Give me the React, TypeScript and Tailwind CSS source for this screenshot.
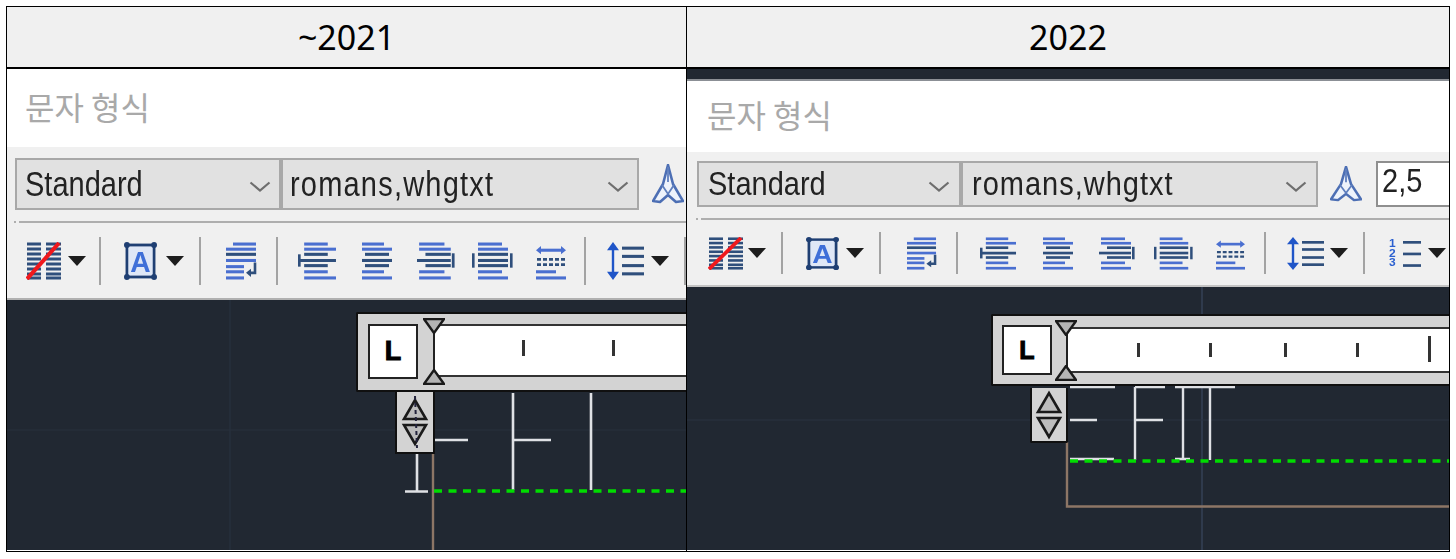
import type { ReactNode } from "react";

const BLUE = "#4a6fd0";
const DARK = "#2f4f7c";

type Line = [number, number, number, string?];

function LinesIcon({ w, h, vb, lines, children }: { w: number; h: number; vb: [number, number]; lines: Line[]; children?: ReactNode }) {
  return (
    <svg width={w} height={h} viewBox={`0 0 ${vb[0]} ${vb[1]}`} preserveAspectRatio="none" className="shrink-0">
      {lines.map(([x1, x2, y, c], i) => (
        <line key={i} x1={x1} x2={x2} y1={y} y2={y} stroke={c ?? BLUE} strokeWidth={3} />
      ))}
      {children}
    </svg>
  );
}

function StrikeIcon({ w, h }: { w: number; h: number }) {
  const ys = [2, 7, 12, 17, 22, 27, 32, 36];
  return (
    <LinesIcon
      w={w}
      h={h}
      vb={[35, 38]}
      lines={ys.flatMap((y): Line[] => [
        [1, 15, y, DARK],
        [20, 35, y, DARK],
      ])}
    >
      <line x1={1} y1={37} x2={33} y2={1} stroke="#f0181c" strokeWidth={4} />
    </LinesIcon>
  );
}

function BoxAIcon({ w, h }: { w: number; h: number }) {
  return (
    <svg width={w} height={h} viewBox="0 0 34 38" preserveAspectRatio="none" className="shrink-0">
      <rect x={3} y={3} width={28} height={32} fill="#dfe7f6" stroke="#1f3f73" strokeWidth={2.8} />
      {[[3, 3], [31, 3], [3, 35], [31, 35]].map(([cx, cy]) => (
        <circle key={`${cx}-${cy}`} cx={cx} cy={cy} r={3} fill="#1f3f73" />
      ))}
      <text x={17} y={30} textAnchor="middle" fontSize={29} fontWeight={700} fontFamily="Liberation Sans, sans-serif" fill="#3f6fd8">
        A
      </text>
    </svg>
  );
}

function WrapIcon({ w, h }: { w: number; h: number }) {
  return (
    <LinesIcon
      w={w}
      h={h}
      vb={[31, 37]}
      lines={[
        [7, 30, 2],
        [0, 30, 7],
        [0, 30, 12, DARK],
        [0, 30, 18],
        [0, 18, 24],
        [0, 18, 29],
        [0, 18, 35],
      ]}
    >
      <path d="M29 20v10H23" fill="none" stroke={DARK} strokeWidth={2.6} />
      <polygon points="20,30 25,26 25,34" fill={DARK} />
    </LinesIcon>
  );
}

const alignLeft: Line[] = [
  [6, 29, 2],
  [6, 37, 7],
  [6, 29, 12, DARK],
  [2, 37, 18, DARK],
  [6, 29, 23, DARK],
  [6, 29, 29],
  [6, 37, 35],
];
const alignCenter: Line[] = [
  [0, 22, 2],
  [0, 30, 7],
  [3, 27, 12, DARK],
  [0, 30, 18, DARK],
  [3, 27, 23, DARK],
  [0, 22, 29],
  [0, 30, 35],
];
const alignRight: Line[] = [
  [2, 26, 2],
  [2, 32, 7],
  [8, 32, 12, DARK],
  [0, 32, 18, DARK],
  [8, 32, 23, DARK],
  [2, 26, 29],
  [2, 32, 35],
];
const alignJustify: Line[] = [
  [6, 30, 2],
  [6, 36, 7],
  [6, 36, 12, DARK],
  [6, 36, 18, DARK],
  [6, 36, 23, DARK],
  [6, 30, 29],
  [6, 36, 35],
];

function AlignLeftIcon({ w, h }: { w: number; h: number }) {
  return (
    <LinesIcon w={w} h={h} vb={[38, 37]} lines={alignLeft}>
      <rect x={0} y={12} width={2.6} height={12} fill={DARK} />
    </LinesIcon>
  );
}

function AlignRightIcon({ w, h }: { w: number; h: number }) {
  return (
    <LinesIcon w={w} h={h} vb={[36, 37]} lines={alignRight}>
      <rect x={33} y={11} width={2.6} height={14} fill={DARK} />
    </LinesIcon>
  );
}

function AlignJustifyIcon({ w, h }: { w: number; h: number }) {
  return (
    <LinesIcon w={w} h={h} vb={[41, 37]} lines={alignJustify}>
      <rect x={0} y={11} width={2.6} height={14} fill={DARK} />
      <rect x={38} y={11} width={2.6} height={14} fill={DARK} />
    </LinesIcon>
  );
}

function DistributeIcon({ w, h }: { w: number; h: number }) {
  return (
    <LinesIcon
      w={w}
      h={h}
      vb={[30, 37]}
      lines={[
        [3, 27, 8],
        [0, 20, 29],
        [0, 30, 35],
      ]}
    >
      <polygon points="0,8 5,4 5,12" fill={BLUE} />
      <polygon points="30,8 25,4 25,12" fill={BLUE} />
      <line x1={1} x2={29} y1={17} y2={17} stroke={DARK} strokeWidth={2.6} strokeDasharray="4 2" />
      <line x1={1} x2={29} y1={22} y2={22} stroke={DARK} strokeWidth={2.6} strokeDasharray="4 2" />
    </LinesIcon>
  );
}

function LineSpacingIcon({ w, h }: { w: number; h: number }) {
  return (
    <LinesIcon
      w={w}
      h={h}
      vb={[37, 37]}
      lines={[
        [15, 37, 6, DARK],
        [15, 37, 14, DARK],
        [15, 37, 23, DARK],
        [15, 37, 31, DARK],
      ]}
    >
      <line x1={6} x2={6} y1={5} y2={32} stroke="#1f55c8" strokeWidth={2.4} />
      <polygon points="6,0 0,8 12,8" fill="#1f55c8" />
      <polygon points="6,37 0,29 12,29" fill="#1f55c8" />
    </LinesIcon>
  );
}

function NumberedIcon({ w, h }: { w: number; h: number }) {
  return (
    <LinesIcon
      w={w}
      h={h}
      vb={[33, 37]}
      lines={[
        [15, 33, 6, DARK],
        [15, 33, 19, DARK],
        [15, 33, 32, DARK],
      ]}
    >
      <text x={1} y={11} fontSize={12} fontWeight={700} fontFamily="Liberation Sans, sans-serif" fill="#2a5fd0">1</text>
      <text x={1} y={22} fontSize={12} fontWeight={700} fontFamily="Liberation Sans, sans-serif" fill="#2a5fd0">2</text>
      <text x={1} y={33} fontSize={12} fontWeight={700} fontFamily="Liberation Sans, sans-serif" fill="#2a5fd0">3</text>
    </LinesIcon>
  );
}

function DropArrow() {
  return (
    <svg width={18} height={10} viewBox="0 0 18 10" className="shrink-0">
      <polygon points="0,0 18,0 9,10" fill="#1d1d1d" />
    </svg>
  );
}

function Chevron({ className }: { className: string }) {
  return (
    <svg width={22} height={11} viewBox="0 0 22 11" className={className}>
      <path d="M1.5 1.5 11 9.5 20.5 1.5" fill="none" stroke="#6e6e6e" strokeWidth={2.2} />
    </svg>
  );
}

function TextHeightIcon({ h, className }: { h: number; className: string }) {
  return (
    <svg width={32} height={h} viewBox="0 0 32 40" preserveAspectRatio="none" className={className}>
      <path d="M16 1 11 20 1 37 8 38 16 31 24 38 31 37 21 20Z" fill="#eef3fb" stroke="#4d6fb4" strokeWidth={2.6} strokeLinejoin="round" />
      <path d="M16 3V18M10 21 16 30 22 21" fill="none" stroke="#5f7fbe" strokeWidth={1.8} />
    </svg>
  );
}

function Sep({ className }: { className: string }) {
  return <div className={`w-[2px] self-stretch shrink-0 bg-[#a3a3a3] ${className}`} />;
}

function Combo({ label, className, textClass, chevronClass }: { label: string; className: string; textClass: string; chevronClass: string }) {
  return (
    <div className={`flex items-center justify-between shrink-0 bg-[#e1e1e1] border-2 border-[#a8a8a8] ${className}`}>
      <span className={`inline-block text-[29px] leading-none text-[#222] font-['Liberation_Sans',sans-serif] whitespace-nowrap ${textClass}`}>{label}</span>
      <Chevron className={chevronClass} />
    </div>
  );
}

function LeftToolbar() {
  const h = 38;
  return (
    <div className="flex items-center h-[48px] mt-[14px] pl-[19px] overflow-hidden">
      <StrikeIcon w={35} h={h} />
      <div className="ml-[7px]"><DropArrow /></div>
      <Sep className="ml-[13px]" />
      <div className="ml-[23px]"><BoxAIcon w={33} h={h} /></div>
      <div className="ml-[9px]"><DropArrow /></div>
      <Sep className="ml-[15px]" />
      <div className="ml-[25px]"><WrapIcon w={31} h={h} /></div>
      <Sep className="ml-[19px]" />
      <div className="ml-[20px]"><AlignLeftIcon w={39} h={h} /></div>
      <div className="ml-[25px]"><LinesIcon w={30} h={h} vb={[30, 37]} lines={alignCenter} /></div>
      <div className="ml-[25px]"><AlignRightIcon w={38} h={h} /></div>
      <div className="ml-[17px]"><AlignJustifyIcon w={41} h={h} /></div>
      <div className="ml-[23px]"><DistributeIcon w={30} h={h} /></div>
      <Sep className="ml-[18px]" />
      <div className="ml-[21px]"><LineSpacingIcon w={37} h={h} /></div>
      <div className="ml-[7px]"><DropArrow /></div>
      <Sep className="ml-[15px]" />
    </div>
  );
}

function RightToolbar() {
  const h = 33;
  return (
    <div className="flex items-center h-[42px] mt-[12px] pl-[21px] overflow-hidden">
      <StrikeIcon w={35} h={h} />
      <div className="ml-[5px]"><DropArrow /></div>
      <Sep className="ml-[15px]" />
      <div className="ml-[23px]"><BoxAIcon w={33} h={h} /></div>
      <div className="ml-[7px]"><DropArrow /></div>
      <Sep className="ml-[15px]" />
      <div className="ml-[26px]"><WrapIcon w={30} h={h} /></div>
      <Sep className="ml-[19px]" />
      <div className="ml-[22px]"><AlignLeftIcon w={37} h={h} /></div>
      <div className="ml-[26px]"><LinesIcon w={30} h={h} vb={[30, 37]} lines={alignCenter} /></div>
      <div className="ml-[26px]"><AlignRightIcon w={36} h={h} /></div>
      <div className="ml-[19px]"><AlignJustifyIcon w={39} h={h} /></div>
      <div className="ml-[23px]"><DistributeIcon w={29} h={h} /></div>
      <Sep className="ml-[19px]" />
      <div className="ml-[21px]"><LineSpacingIcon w={37} h={h} /></div>
      <div className="ml-[6px]"><DropArrow /></div>
      <Sep className="ml-[15px]" />
      <div className="ml-[23px]"><NumberedIcon w={33} h={h} /></div>
      <div className="ml-[7px]"><DropArrow /></div>
    </div>
  );
}

function Hourglass({ flip, className }: { flip?: boolean; className: string }) {
  return (
    <svg width={22} height={16} viewBox="0 0 22 16" className={className}>
      <polygon points={flip ? "1,15 21,15 11,1" : "1,1 21,1 11,15"} fill="#b4b4b4" stroke="#1a1a1a" strokeWidth={2.4} />
    </svg>
  );
}

function SpinTriangles({ tangled }: { tangled?: boolean }) {
  return (
    <svg width={28} height={52} viewBox="0 0 28 52">
      <polygon points="3,23 25,23 14,4" fill="#bdbdbd" stroke="#1a1a1a" strokeWidth={2.6} />
      <polygon points="3,29 25,29 14,48" fill="#bdbdbd" stroke="#1a1a1a" strokeWidth={2.6} />
      {tangled && <line x1={14} y1={0} x2={16} y2={52} stroke="#23233c" strokeWidth={2} strokeDasharray="4 3" />}
    </svg>
  );
}

function Tick({ className }: { className: string }) {
  return <div className={`absolute w-[3px] bg-[#333] ${className}`} />;
}

function LeftCanvas() {
  return (
    <div className="relative h-[250px] bg-[#212832] overflow-hidden">
      {/* drawing, 0,0 = image x7 y300 */}
      <svg width={680} height={250} viewBox="0 0 680 250" className="absolute left-0 top-0">
        <line x1={223} x2={223} y1={0} y2={250} stroke="#293240" />
        <line x1={0} x2={680} y1={130} y2={130} stroke="#28303c" />
        <line x1={426} x2={426} y1={154} y2={250} stroke="#8d7666" strokeWidth={2.4} />
        <g stroke="#dfe1e5" strokeWidth={2.6} fill="none">
          <path d="M410 150V191M398 191.500H421" />
          <path d="M428 140H461" />
          <path d="M506 93V190M506 140H544" />
          <path d="M584 93V190" />
        </g>
        <line x1={427} x2={680} y1={191} y2={191} stroke="#00dc00" strokeWidth={3.4} strokeDasharray="8 6.500" />
      </svg>
      {/* ruler */}
      <div className="absolute left-[349px] top-[12px] w-[340px] h-[80px] bg-[#d3d3d3] border-2 border-r-0 border-[#101010] rounded-l-[2px]">
        <div className="absolute left-[10px] top-[10px] w-[50px] h-[55px] bg-white border-2 border-[#222] flex items-center justify-center">
          <span className="font-['Liberation_Sans',sans-serif] font-bold text-[27px] leading-none text-black [-webkit-text-stroke:1px_black]">L</span>
        </div>
        <div className="absolute left-[77px] right-0 top-[10px] h-[53px] bg-white border-y-2 border-[#333]">
          <Tick className="left-[87px] top-[14px] h-[16px]" />
          <Tick className="left-[177px] top-[14px] h-[16px]" />
        </div>
        <div className="absolute left-[75px] top-[18px] w-[2px] h-[38px] bg-[#222]" />
        <Hourglass className="absolute left-[65px] top-[4px]" />
        <Hourglass flip className="absolute left-[65px] top-[55px]" />
      </div>
      {/* spinner */}
      <div className="absolute left-[388px] top-[92px] w-[40px] h-[62px] bg-[#d3d3d3] border-2 border-t-0 border-[#101010] flex items-center justify-center">
        <SpinTriangles tangled />
      </div>
    </div>
  );
}

function RightCanvas() {
  return (
    <div className="relative h-[263px] bg-[#212832] overflow-hidden">
      {/* drawing, 0,0 = image x687 y288 */}
      <svg width={763} height={263} viewBox="0 0 763 263" className="absolute left-0 top-0">
        <line x1={515} x2={515} y1={0} y2={263} stroke="#2f3a4c" strokeWidth={2} />
        <line x1={0} x2={763} y1={133} y2={133} stroke="#2a3340" />
        <path d="M380 155V219.500H763" fill="none" stroke="#8d7666" strokeWidth={2.4} />
        <g stroke="#dfe1e5" strokeWidth={2.4} fill="none">
          <path d="M383 100H428M383 133H410M383 172H427" />
          <path d="M448 100V173M448 100H478M448 133H476" />
          <path d="M496 100V173M488 100H503M488 172H503" />
          <path d="M503 100H548M523 100V173" />
        </g>
        <line x1={383} x2={763} y1={174} y2={174} stroke="#00dc00" strokeWidth={3.4} strokeDasharray="8 6.500" />
      </svg>
      {/* ruler */}
      <div className="absolute left-[304px] top-[27px] w-[470px] h-[72px] bg-[#d3d3d3] border-2 border-r-0 border-[#101010] rounded-l-[2px]">
        <div className="absolute left-[9px] top-[9px] w-[50px] h-[50px] bg-white border-2 border-[#222] flex items-center justify-center">
          <span className="font-['Liberation_Sans',sans-serif] font-bold text-[25px] leading-none text-black [-webkit-text-stroke:1px_black]">L</span>
        </div>
        <div className="absolute left-[75px] right-0 top-[11px] h-[46px] bg-white border-y-2 border-[#333]">
          <Tick className="left-[69px] top-[14px] h-[14px]" />
          <Tick className="left-[141px] top-[14px] h-[14px]" />
          <Tick className="left-[216px] top-[14px] h-[14px]" />
          <Tick className="left-[288px] top-[14px] h-[14px]" />
          <Tick className="left-[360px] top-[7px] h-[26px]" />
        </div>
        <div className="absolute left-[73px] top-[18px] w-[2px] h-[34px] bg-[#222]" />
        <Hourglass className="absolute left-[62px] top-[4px]" />
        <Hourglass flip className="absolute left-[62px] top-[49px]" />
      </div>
      {/* spinner */}
      <div className="absolute left-[343px] top-[101px] w-[38px] h-[55px] bg-[#d3d3d3] border-2 border-t-0 border-[#101010] rounded-b-[2px] flex items-center justify-center">
        <SpinTriangles />
      </div>
    </div>
  );
}

function HeaderCell({ children, className }: { children: ReactNode; className: string }) {
  return (
    <div className={`h-[62px] flex items-center justify-center bg-[#f0f0f0] border-b-2 border-black text-[34px] leading-none text-black font-['Noto_Sans',sans-serif] ${className}`}>
      {children}
    </div>
  );
}

function Title({ className }: { className: string }) {
  return (
    <div className={`bg-white flex items-center text-[32px] leading-none text-[#a9a9a9] font-['Noto_Sans_CJK_KR',sans-serif] ${className}`}>
      문자 형식
    </div>
  );
}

function Rule({ className }: { className: string }) {
  return (
    <div className={`flex gap-[3px] ${className}`}>
      <div className="w-[2px] h-[2px] bg-[#aeaeae]" />
      <div className="flex-1 h-[2px] bg-[#aeaeae]" />
    </div>
  );
}

export default function App() {
  return (
    <div className="w-[1456px] h-[559px] bg-white pl-[6px] pt-[6px]">
      <div className="w-[1444px] h-[546px] border border-black grid grid-cols-[680px_1fr] grid-rows-[62px_1fr] overflow-hidden">
        <HeaderCell className="border-r border-r-black w-[680px]">~2021</HeaderCell>
        <HeaderCell className="">2022</HeaderCell>

        {/* ~2021 */}
        <div className="border-r border-black w-[680px] min-w-0 overflow-hidden">
          <Title className="h-[78px] pl-[18px] pb-[4px]" />
          <div className="h-[153px] bg-[#f0f0f0] border-b-2 border-[#b0b0b0] overflow-hidden blur-[0.4px]">
            <div className="flex items-center pt-[11px] pl-[8px]">
              <Combo label="Standard" className="w-[266px] h-[52px] pl-[8px] pr-[8px]" textClass="scale-y-[1.2]" chevronClass="mt-[4px] shrink-0" />
              <Combo label="romans,whgtxt" className="w-[358px] h-[52px] pl-[7px] pr-[8px]" textClass="scale-y-[1.2] tracking-[1.2px]" chevronClass="mt-[4px] shrink-0" />
              <TextHeightIcon h={40} className="ml-[13px] shrink-0" />
            </div>
            <Rule className="mt-[11px] ml-[7px]" />
            <LeftToolbar />
          </div>
          <LeftCanvas />
        </div>

        {/* 2022 */}
        <div className="min-w-0 overflow-hidden">
          <div className="h-[12px] bg-[#212832] border-b-2 border-[#8b8f95]" />
          <Title className="h-[71px] pl-[20px] pb-[5px]" />
          <div className="h-[135px] bg-[#f0f0f0] border-b-2 border-[#c4c4c4] overflow-hidden blur-[0.4px]">
            <div className="flex items-center pt-[9px] pl-[10px]">
              <Combo label="Standard" className="w-[264px] h-[46px] pl-[9px] pr-[9px]" textClass="scale-y-[1.15]" chevronClass="mt-[4px] shrink-0" />
              <Combo label="romans,whgtxt" className="w-[357px] h-[46px] pl-[9px] pr-[9px]" textClass="scale-y-[1.15] tracking-[1px]" chevronClass="mt-[4px] shrink-0" />
              <TextHeightIcon h={36} className="ml-[12px] shrink-0" />
              <div className="ml-[14px] w-[80px] h-[46px] shrink-0 bg-white border-2 border-r-0 border-[#8f8f8f] pl-[4px] pt-[4px]">
                <span className="inline-block text-[29px] leading-none text-[#222] font-['Liberation_Sans',sans-serif] scale-y-[1.15]">2,5</span>
              </div>
            </div>
            <Rule className="mt-[11px] ml-[9px]" />
            <RightToolbar />
          </div>
          <RightCanvas />
        </div>
      </div>
    </div>
  );
}
